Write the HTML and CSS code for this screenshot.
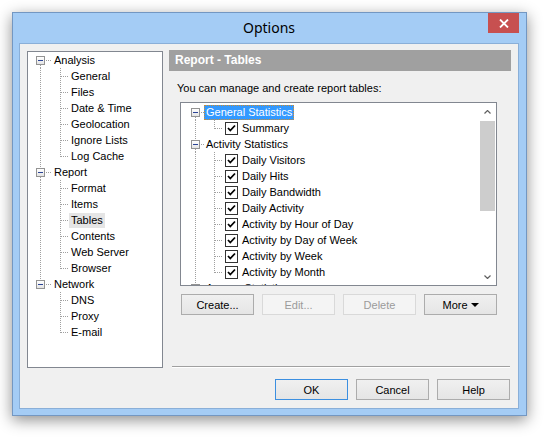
FILE: index.html
```html
<!DOCTYPE html>
<html>
<head>
<meta charset="utf-8">
<title>Options</title>
<link rel="stylesheet" href="styles.css">
</head>
<body>
<div class="window">
  <div class="titlebar">
    <div class="tb-side"></div>
    <div class="title">Options</div>
    <div class="tb-side tb-right">
      <div class="close"><svg width="10" height="9" viewBox="0 0 10 9"><path d="M1 0.5 L9 8.5 M9 0.5 L1 8.5" stroke="#fff" stroke-width="1.8" fill="none"/></svg></div>
    </div>
  </div>
  <div class="client">
    <div class="navpanel tree lt">
      <div class="row"><span class="gut g0 r-first"><span class="box"></span></span><span class="lbl">Analysis</span></div>
      <div class="row"><span class="gut g1 c-on"></span><span class="gut g2"></span><span class="lbl">General</span></div>
      <div class="row"><span class="gut g1 c-on"></span><span class="gut g2"></span><span class="lbl">Files</span></div>
      <div class="row"><span class="gut g1 c-on"></span><span class="gut g2"></span><span class="lbl">Date &amp; Time</span></div>
      <div class="row"><span class="gut g1 c-on"></span><span class="gut g2"></span><span class="lbl">Geolocation</span></div>
      <div class="row"><span class="gut g1 c-on"></span><span class="gut g2"></span><span class="lbl">Ignore Lists</span></div>
      <div class="row"><span class="gut g1 c-on"></span><span class="gut g2 end"></span><span class="lbl">Log Cache</span></div>
      <div class="row"><span class="gut g0 r-mid"><span class="box"></span></span><span class="lbl">Report</span></div>
      <div class="row"><span class="gut g1 c-on"></span><span class="gut g2"></span><span class="lbl">Format</span></div>
      <div class="row"><span class="gut g1 c-on"></span><span class="gut g2"></span><span class="lbl">Items</span></div>
      <div class="row"><span class="gut g1 c-on"></span><span class="gut g2"></span><span class="lbl hl">Tables</span></div>
      <div class="row"><span class="gut g1 c-on"></span><span class="gut g2"></span><span class="lbl">Contents</span></div>
      <div class="row"><span class="gut g1 c-on"></span><span class="gut g2"></span><span class="lbl">Web Server</span></div>
      <div class="row"><span class="gut g1 c-on"></span><span class="gut g2 end"></span><span class="lbl">Browser</span></div>
      <div class="row"><span class="gut g0 r-last"><span class="box"></span></span><span class="lbl">Network</span></div>
      <div class="row"><span class="gut g1"></span><span class="gut g2"></span><span class="lbl">DNS</span></div>
      <div class="row"><span class="gut g1"></span><span class="gut g2"></span><span class="lbl">Proxy</span></div>
      <div class="row"><span class="gut g1"></span><span class="gut g2 end"></span><span class="lbl">E-mail</span></div>
    </div>

    <div class="page">
      <div class="page-head">Report - Tables</div>
      <div class="desc">You can manage and create report tables:</div>
      <div class="listbox">
        <div class="tree rt">
          <div class="row"><span class="gut g0 r-first"><span class="box"></span></span><span class="lbl sel">General Statistics</span></div>
          <div class="row"><span class="gut g1 c-on"></span><span class="gut g2 end"></span><span class="cb"><svg width="11" height="11" viewBox="0 0 11 11"><path d="M2 5 L4.3 7.5 L9 2.5" stroke="#000" stroke-width="1.8" fill="none"/></svg></span><span class="lbl">Summary</span></div>
          <div class="row"><span class="gut g0 r-mid"><span class="box"></span></span><span class="lbl">Activity Statistics</span></div>
          <div class="row"><span class="gut g1 c-on"></span><span class="gut g2"></span><span class="cb"><svg width="11" height="11" viewBox="0 0 11 11"><path d="M2 5 L4.3 7.5 L9 2.5" stroke="#000" stroke-width="1.8" fill="none"/></svg></span><span class="lbl">Daily Visitors</span></div>
          <div class="row"><span class="gut g1 c-on"></span><span class="gut g2"></span><span class="cb"><svg width="11" height="11" viewBox="0 0 11 11"><path d="M2 5 L4.3 7.5 L9 2.5" stroke="#000" stroke-width="1.8" fill="none"/></svg></span><span class="lbl">Daily Hits</span></div>
          <div class="row"><span class="gut g1 c-on"></span><span class="gut g2"></span><span class="cb"><svg width="11" height="11" viewBox="0 0 11 11"><path d="M2 5 L4.3 7.5 L9 2.5" stroke="#000" stroke-width="1.8" fill="none"/></svg></span><span class="lbl">Daily Bandwidth</span></div>
          <div class="row"><span class="gut g1 c-on"></span><span class="gut g2"></span><span class="cb"><svg width="11" height="11" viewBox="0 0 11 11"><path d="M2 5 L4.3 7.5 L9 2.5" stroke="#000" stroke-width="1.8" fill="none"/></svg></span><span class="lbl">Daily Activity</span></div>
          <div class="row"><span class="gut g1 c-on"></span><span class="gut g2"></span><span class="cb"><svg width="11" height="11" viewBox="0 0 11 11"><path d="M2 5 L4.3 7.5 L9 2.5" stroke="#000" stroke-width="1.8" fill="none"/></svg></span><span class="lbl">Activity by Hour of Day</span></div>
          <div class="row"><span class="gut g1 c-on"></span><span class="gut g2"></span><span class="cb"><svg width="11" height="11" viewBox="0 0 11 11"><path d="M2 5 L4.3 7.5 L9 2.5" stroke="#000" stroke-width="1.8" fill="none"/></svg></span><span class="lbl">Activity by Day of Week</span></div>
          <div class="row"><span class="gut g1 c-on"></span><span class="gut g2"></span><span class="cb"><svg width="11" height="11" viewBox="0 0 11 11"><path d="M2 5 L4.3 7.5 L9 2.5" stroke="#000" stroke-width="1.8" fill="none"/></svg></span><span class="lbl">Activity by Week</span></div>
          <div class="row"><span class="gut g1 c-on"></span><span class="gut g2 end"></span><span class="cb"><svg width="11" height="11" viewBox="0 0 11 11"><path d="M2 5 L4.3 7.5 L9 2.5" stroke="#000" stroke-width="1.8" fill="none"/></svg></span><span class="lbl">Activity by Month</span></div>
          <div class="row"><span class="gut g0 r-last"><span class="box"></span></span><span class="lbl">Access Statistics</span></div>
        </div>
        <div class="scrollbar">
          <div class="arrow"><svg width="7" height="4" viewBox="0 0 7 4"><polyline points="0.5,3.5 3.5,0.5 6.5,3.5" stroke="#606060" stroke-width="1.2" fill="none"/></svg></div>
          <div class="thumb"></div>
          <div class="track"></div>
          <div class="arrow"><svg width="7" height="4" viewBox="0 0 7 4"><polyline points="0.5,0.5 3.5,3.5 6.5,0.5" stroke="#606060" stroke-width="1.2" fill="none"/></svg></div>
        </div>
      </div>
      <div class="btnrow">
        <button class="btn">Create...</button>
        <button class="btn disabled">Edit...</button>
        <button class="btn disabled">Delete</button>
        <button class="btn">More<span class="caret"></span></button>
      </div>
      <div class="sep"></div>
    </div>

    <div class="dlg-buttons">
      <button class="btn default">OK</button>
      <button class="btn">Cancel</button>
      <button class="btn">Help</button>
    </div>
  </div>
</div>
</body>
</html>
```

FILE: styles.css
```css
:root {
  --dv: repeating-linear-gradient(to bottom, #a0a0a0 0 1px, transparent 1px 2px);
  --dh: repeating-linear-gradient(to right, #a0a0a0 0 1px, transparent 1px 2px);
}

html, body {
  margin: 0;
  padding: 0;
  background: #ffffff;
  width: 546px;
  height: 437px;
  overflow: hidden;
}

.window {
  margin: 12px 0 0 12px;
  width: 515px;
  height: 404px;
  box-sizing: border-box;
  border: 1px solid #7397c2;
  background: #a4ccf5;
  padding: 0 7px 6px 6px;
  display: flex;
  flex-direction: column;
  box-shadow: 0 4px 14px rgba(0, 0, 0, 0.45);
}

.titlebar {
  height: 30px;
  flex: none;
  display: grid;
  grid-template-columns: 1fr auto 1fr;
  align-items: start;
}

.title {
  font: 14px "Noto Sans", "Open Sans", sans-serif;
  line-height: 30px;
  color: #000;
}

.tb-right {
  display: flex;
  justify-content: flex-end;
}

.close {
  width: 31px;
  height: 20px;
  background: #c75050;
  display: flex;
  align-items: center;
  justify-content: center;
}

.client {
  flex: 1;
  background: #f0f0f0;
  border: 1px solid #8aafd8;
  display: grid;
  grid-template-columns: 136px 342px;
  grid-template-rows: auto auto;
  column-gap: 6px;
  padding: 6px 0 0 7px;
  align-content: start;
  font: 11px "Liberation Sans", Arial, sans-serif;
  color: #000;
}

/* ---------- trees ---------- */
.tree {
  font: 11px "Liberation Sans", Arial, sans-serif;
}

.row {
  display: flex;
  align-items: center;
  height: 16px;
  white-space: nowrap;
}

.gut {
  flex: none;
  height: 16px;
  display: flex;
  align-items: center;
  background-repeat: no-repeat;
}

.box {
  width: 9px;
  height: 9px;
  box-sizing: border-box;
  border: 1px solid #939393;
  background: linear-gradient(#ffffff, #e4e4e4);
  display: flex;
  align-items: center;
  justify-content: center;
}

.box::after {
  content: "";
  width: 5px;
  height: 1px;
  background: #2b4496;
}

.lbl {
  padding: 0 2px;
  line-height: 15px;
  height: 15px;
}

.hl {
  background: #e5e5e5;
}

.sel {
  background: #3399ff;
  color: #fff;
  outline: 1px dotted #d08c2c;
  outline-offset: -1px;
}

.cb {
  flex: none;
  width: 13px;
  height: 13px;
  box-sizing: border-box;
  border: 1px solid #333;
  background: #fff;
  display: flex;
  align-items: center;
  justify-content: center;
  margin-right: 2px;
}

/* left navigation tree */
.navpanel {
  margin-top: 1px;
  height: 317px;
  box-sizing: border-box;
  border: 1px solid #828790;
  background: #fff;
}

.lt .g0, .lt .g1 { width: 24px; }
.lt .g0 .box { margin-left: 8px; }
.lt .r-first {
  background-image: var(--dv), var(--dh);
  background-position: 12px 13px, 18px 8px;
  background-size: 1px 3px, 5px 1px;
}
.lt .r-mid {
  background-image: var(--dv), var(--dv), var(--dh);
  background-position: 12px 0, 12px 13px, 18px 8px;
  background-size: 1px 4px, 1px 3px, 5px 1px;
}
.lt .r-last {
  background-image: var(--dv), var(--dh);
  background-position: 12px 0, 18px 8px;
  background-size: 1px 4px, 5px 1px;
}
.lt .c-on {
  background-image: var(--dv);
  background-position: 12px 0;
  background-size: 1px 16px;
}
.lt .g2 {
  width: 17px;
  background-image: var(--dv), var(--dh);
  background-position: 8px 0, 9px 8px;
  background-size: 1px 16px, 7px 1px;
}
.lt .g2.end { background-size: 1px 9px, 7px 1px; }

/* right list tree */
.rt .g0, .rt .g1 { width: 23px; }
.rt .g0 .box { margin-left: 10px; }
.rt .r-first {
  background-image: var(--dv), var(--dh);
  background-position: 14px 13px, 20px 8px;
  background-size: 1px 3px, 3px 1px;
}
.rt .r-mid {
  background-image: var(--dv), var(--dv), var(--dh);
  background-position: 14px 0, 14px 13px, 20px 8px;
  background-size: 1px 4px, 1px 3px, 3px 1px;
}
.rt .r-last {
  background-image: var(--dv), var(--dh);
  background-position: 14px 0, 20px 8px;
  background-size: 1px 4px, 3px 1px;
}
.rt .c-on {
  background-image: var(--dv);
  background-position: 14px 0;
  background-size: 1px 16px;
}
.rt .g2 {
  width: 21px;
  background-image: var(--dv), var(--dh);
  background-position: 10px 0, 11px 8px;
  background-size: 1px 16px, 8px 1px;
}
.rt .g2.end { background-size: 1px 9px, 8px 1px; }

/* ---------- page ---------- */
.page {
  display: flex;
  flex-direction: column;
}

.page-head {
  height: 21px;
  background: #a0a0a0;
  color: #fff;
  font: bold 12px "Liberation Sans", Arial, sans-serif;
  line-height: 21px;
  padding-left: 6px;
}

.desc {
  margin-top: 9px;
  height: 16px;
  line-height: 16px;
  padding-left: 8px;
}

.listbox {
  margin: 6px 0 0 11px;
  width: 317px;
  height: 184px;
  box-sizing: border-box;
  border: 1px solid #828790;
  background: #fff;
  display: flex;
  overflow: hidden;
}

.rt {
  flex: 1;
  padding-top: 1px;
  overflow: hidden;
}

.scrollbar {
  width: 17px;
  flex: none;
  display: flex;
  flex-direction: column;
  background: #ffffff;
}

.arrow {
  height: 17px;
  flex: none;
  display: flex;
  align-items: center;
  justify-content: center;
}

.thumb {
  height: 90px;
  margin: 1px 1px 0 1px;
  background: #cdcdcd;
}

.track { flex: 1; }

.btnrow {
  margin: 8px 0 0 12px;
  display: flex;
  gap: 8px;
}

.btn {
  width: 73px;
  height: 21px;
  box-sizing: border-box;
  margin: 0;
  padding: 0;
  border: 1px solid #acacac;
  border-radius: 0;
  background: linear-gradient(#f0f0f0, #e5e5e5);
  font: 11px "Liberation Sans", Arial, sans-serif;
  color: #000;
  display: flex;
  align-items: center;
  justify-content: center;
}

.btn.disabled {
  border-color: #d9d9d9;
  background: #f4f4f4;
  color: #9b9b9b;
}

.btn.default {
  border-color: #3c8fe0;
}

.caret {
  width: 0;
  height: 0;
  margin-left: 3px;
  border-left: 4px solid transparent;
  border-right: 4px solid transparent;
  border-top: 4px solid #000;
}

.sep {
  margin: 51px 0 0 3px;
  width: 338px;
  border-top: 1px solid #a0a0a0;
  border-bottom: 1px solid #ffffff;
}

.dlg-buttons {
  grid-column: 1 / -1;
  margin-top: 11px;
  padding-right: 1px;
  display: flex;
  justify-content: flex-end;
  gap: 8px;
}
```
